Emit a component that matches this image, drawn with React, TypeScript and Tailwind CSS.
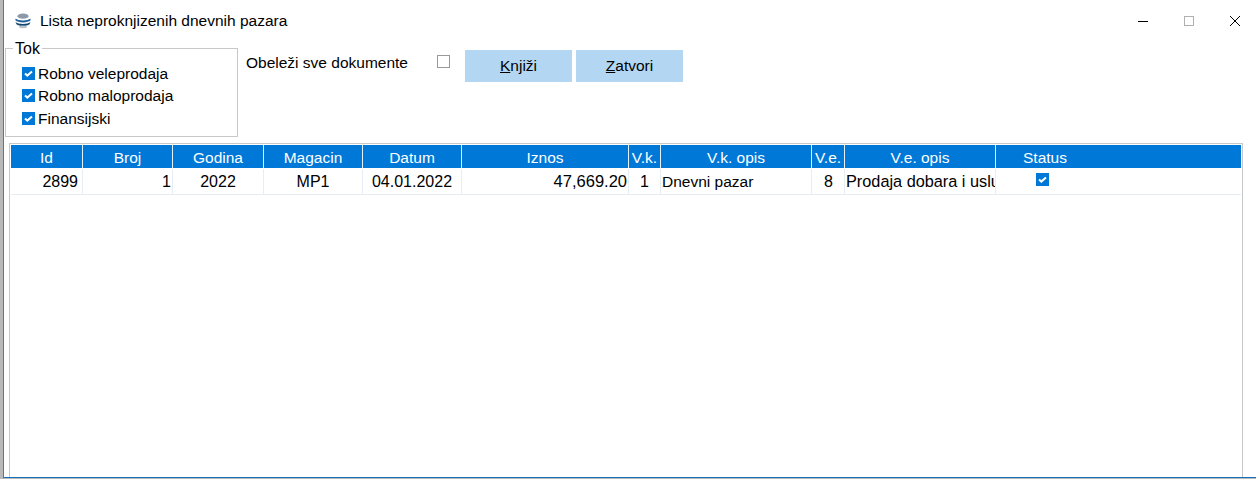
const columns = [
  { title: "Id", width: "w-[72px]" },
  { title: "Broj", width: "w-[90px]" },
  { title: "Godina", width: "w-[91px]" },
  { title: "Magacin", width: "w-[99px]" },
  { title: "Datum", width: "w-[99px]" },
  { title: "Iznos", width: "w-[167px]" },
  { title: "V.k.", width: "w-[32px]" },
  { title: "V.k. opis", width: "w-[151px]" },
  { title: "V.e.", width: "w-[33px]" },
  { title: "V.e. opis", width: "w-[151px]" },
];

function CheckBox() {
  return (
    <span className="flex h-[13px] w-[13px] shrink-0 items-center justify-center bg-[#0078d7]">
      <svg width="13" height="13" viewBox="0 0 13 13" fill="none">
        <path d="M3 6.5 L5.3 8.6 L10 4.5" stroke="white" strokeWidth="2" />
      </svg>
    </span>
  );
}

function FlowOption({ label }: { label: string }) {
  return (
    <label className="flex h-[22.5px] items-center gap-[3px]">
      <CheckBox />
      <span>{label}</span>
    </label>
  );
}

function DbIcon() {
  return (
    <svg width="16" height="16" viewBox="0 0 16 16">
      <ellipse cx="8" cy="3.2" rx="5.5" ry="2.6" fill="#8c99a8" />
      <path d="M0.5 5.5 C3 8 13 8 15.5 5.5 L15.5 7.6 C13 10 3 10 0.5 7.6 Z" fill="#1c5f9e" />
      <path d="M0.5 9 C3 11.5 13 11.5 15.5 9 L14.5 11.2 C12 13.4 4 13.4 1.5 11.2 Z" fill="#14466f" />
      <ellipse cx="8" cy="14" rx="4" ry="1.2" fill="#b9c2cc" />
    </svg>
  );
}

function WindowButtons() {
  return (
    <div className="flex items-center gap-[36px] pr-[16px]">
      <svg width="10" height="10" viewBox="0 0 10 10">
        <path d="M0 5.5 H10" stroke="#000" strokeWidth="1" />
      </svg>
      <span className="h-[10px] w-[10px] border border-[#b0b0b0]" />
      <svg width="10" height="10" viewBox="0 0 10 10">
        <path d="M0 0 L10 10 M10 0 L0 10" stroke="#000" strokeWidth="1" />
      </svg>
    </div>
  );
}

export default function App() {
  return (
    <div className="flex h-[479px] w-[1256px] overflow-hidden bg-[#b9b9b9] font-['Liberation_Sans',sans-serif] text-[15.5px] text-black">
      <div className="ml-[3px] flex h-[478px] w-full flex-col border-b border-l border-b-[#1a6fb8] border-l-[#3f7fb5] bg-white">
        {/* Title bar */}
        <header className="flex h-[41px] shrink-0 items-center justify-between">
          <div className="flex items-center gap-[9px] pl-[11px]">
            <DbIcon />
            <span>Lista neproknjizenih dnevnih pazara</span>
          </div>
          <WindowButtons />
        </header>

        {/* Filters and actions */}
        <section className="flex h-[102px] shrink-0 items-start">
          <fieldset className="ml-[1px] h-[96px] w-[233px] border border-[#c8c8c8] pl-[16px] pt-[6px]">
            <legend className="ml-[-9px] px-[2px] text-[16px] leading-[15px]">Tok</legend>
            <FlowOption label="Robno veleprodaja" />
            <FlowOption label="Robno maloprodaja" />
            <FlowOption label="Finansijski" />
          </fieldset>
          <div className="ml-[8px] mt-[10px] w-[191px]">Obeleži sve dokumente</div>
          <span className="mt-[14px] h-[13px] w-[13px] border border-[#999]" />
          <button className="ml-[15px] mt-[9px] h-[32px] w-[107px] bg-[#b3d7f3]">
            <u>K</u>njiži
          </button>
          <button className="ml-[4px] mt-[9px] h-[32px] w-[107px] bg-[#b3d7f3]">
            <u>Z</u>atvori
          </button>
        </section>

        {/* Grid */}
        <section className="ml-[5px] mr-[13px] min-h-0 flex-1 border-x border-t border-[#c8c8c8] px-[1px] pt-[1px]">
          <div className="flex h-[23px] bg-[#0078d7] text-white">
            {columns.map((c) => (
              <div key={c.title} className={`${c.width} shrink-0 border-r border-white/90 text-center leading-[25px]`}>
                {c.title}
              </div>
            ))}
            <div className="flex-1 pr-[147px] text-center leading-[25px]">Status</div>
          </div>
          <div className="flex h-[27px] border-y border-b-[#e6edf5] border-t-white leading-[25px]">
            <div className="w-[72px] shrink-0 border-r border-[#e6edf5] pr-[4px] text-right text-[16px]">2899</div>
            <div className="w-[90px] shrink-0 border-r border-[#e6edf5] pr-[1px] text-right text-[16px]">1</div>
            <div className="w-[91px] shrink-0 border-r border-[#e6edf5] text-center text-[16px]">2022</div>
            <div className="w-[99px] shrink-0 border-r border-[#e6edf5] text-center text-[16px]">MP1</div>
            <div className="w-[99px] shrink-0 border-r border-[#e6edf5] text-center text-[16px]">04.01.2022</div>
            <div className="w-[167px] shrink-0 border-r border-[#e6edf5] pr-[1px] text-right text-[16.5px]">47,669.20</div>
            <div className="w-[32px] shrink-0 border-r border-[#e6edf5] text-center text-[16px]">1</div>
            <div className="w-[151px] shrink-0 border-r border-[#e6edf5] pl-[1px]">Dnevni pazar</div>
            <div className="w-[33px] shrink-0 border-r border-[#e6edf5] pr-[11px] text-right text-[16px]">8</div>
            <div className="w-[151px] shrink-0 overflow-hidden whitespace-nowrap border-r border-[#e6edf5] pl-[1px] text-[16.3px]">Prodaja dobara i usluga</div>
            <div className="flex-1 pl-[40px] pt-[4px]">
              <CheckBox />
            </div>
          </div>
        </section>
      </div>
    </div>
  );
}
